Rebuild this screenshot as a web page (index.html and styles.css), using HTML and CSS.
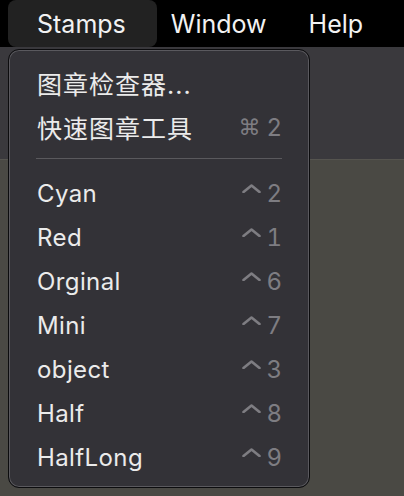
FILE: index.html
```html
<!DOCTYPE html>
<html>
<head>
<meta charset="utf-8">
<link rel="stylesheet" href="styles.css">
</head>
<body>
<div class="screen">
  <header class="menubar">
    <span class="mb-item active">Stamps</span>
    <span class="mb-item">Window</span>
    <span class="mb-item">Help</span>
  </header>
  <div class="toolbar"></div>
  <div class="content"></div>

  <div class="menu">
    <div class="row cjk"><span class="label">图章检查器...</span></div>
    <div class="row cjk"><span class="label">快速图章工具</span><span class="key"><span class="mod">⌘</span>2</span></div>
    <div class="sep"></div>
    <div class="row"><span class="label">Cyan</span><span class="key"><svg class="caret" viewBox="0 0 19 9"><path d="M1.5 8 L9.5 1.5 L17.5 8"/></svg>2</span></div>
    <div class="row"><span class="label">Red</span><span class="key"><svg class="caret" viewBox="0 0 19 9"><path d="M1.5 8 L9.5 1.5 L17.5 8"/></svg>1</span></div>
    <div class="row"><span class="label">Orginal</span><span class="key"><svg class="caret" viewBox="0 0 19 9"><path d="M1.5 8 L9.5 1.5 L17.5 8"/></svg>6</span></div>
    <div class="row"><span class="label">Mini</span><span class="key"><svg class="caret" viewBox="0 0 19 9"><path d="M1.5 8 L9.5 1.5 L17.5 8"/></svg>7</span></div>
    <div class="row"><span class="label">object</span><span class="key"><svg class="caret" viewBox="0 0 19 9"><path d="M1.5 8 L9.5 1.5 L17.5 8"/></svg>3</span></div>
    <div class="row"><span class="label">Half</span><span class="key"><svg class="caret" viewBox="0 0 19 9"><path d="M1.5 8 L9.5 1.5 L17.5 8"/></svg>8</span></div>
    <div class="row"><span class="label">HalfLong</span><span class="key"><svg class="caret" viewBox="0 0 19 9"><path d="M1.5 8 L9.5 1.5 L17.5 8"/></svg>9</span></div>
  </div>
</div>
</body>
</html>
```
FILE: styles.css
```css
html, body {
  margin: 0;
  padding: 0;
  background: #4a4944;
}
.screen {
  position: relative;
  width: 404px;
  height: 496px;
  overflow: hidden;
  display: flex;
  flex-direction: column;
  font-family: Inter, "Noto Sans CJK SC", sans-serif;
}
.menubar {
  height: 47px;
  background: #000;
  display: flex;
  align-items: stretch;
  padding-left: 8px;
  color: #f2f2f2;
  font-size: 25px;
}
.mb-item {
  display: flex;
  align-items: center;
  margin-left: 42px;
}
.mb-item.active {
  margin-left: 0;
  padding: 0 31px 0 29px;
  background: #222222;
  border-radius: 8px;
}
.mb-item.active + .mb-item {
  margin-left: 14px;
}
.toolbar {
  height: 112px;
  background: #3a393d;
  border-bottom: 1px solid #55544f;
}
.content {
  flex: 1;
  background: #4a4944;
}
.menu {
  position: absolute;
  left: 8px;
  top: 49px;
  width: 302px;
  height: 439px;
  box-sizing: border-box;
  padding: 11px 0 0;
  background: #333237;
  border: 1px solid #0c0c0e;
  border-radius: 11px;
  box-shadow: inset 0 0 0 1px #5a595e;
  color: #ebebeb;
  font-size: 24px;
}
.row {
  height: 44px;
  display: flex;
  align-items: center;
  justify-content: space-between;
  padding: 0 27px 0 28px;
  letter-spacing: 0.4px;
}
.row.cjk .label {
  font-size: 25px;
  letter-spacing: 1px;
}
.key {
  color: #7e7d82;
  display: flex;
  align-items: center;
  letter-spacing: 0;
  font-variant-numeric: tabular-nums;
}
.mod {
  margin-right: 6px;
  font-size: 22px;
  font-family: "DejaVu Sans", sans-serif;
}
.caret {
  width: 19px;
  height: 9px;
  margin-right: 5px;
  transform: translateY(-5px);
  fill: none;
  stroke: #7e7d82;
  stroke-width: 2.6;
  stroke-linecap: round;
  stroke-linejoin: round;
}
.sep {
  height: 1px;
  margin: 9px 27px 12px;
  background: #5a595d;
}
```
